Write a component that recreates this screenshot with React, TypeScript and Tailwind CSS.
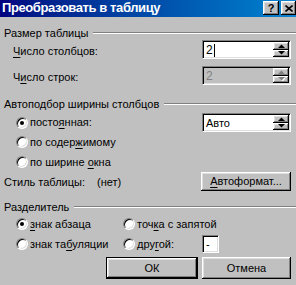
import React from "react";

const raised =
  "bg-[#c0c0c0] shadow-[inset_-1px_-1px_0_#000,inset_1px_1px_0_#fff,inset_-2px_-2px_0_#808080,inset_2px_2px_0_#dfdfdf]";
const sunken =
  "border border-t-[#808080] border-l-[#808080] border-b-white border-r-white shadow-[inset_1px_1px_0_#000,inset_-1px_-1px_0_#dfdfdf]";

function U({ children }: { children: React.ReactNode }) {
  return <span className="underline underline-offset-[2px]">{children}</span>;
}

function GroupHeader({ label, cls }: { label: string; cls: string }) {
  return (
    <div className={`flex items-center h-[14px] -mr-[5px] ${cls}`}>
      <span className="whitespace-nowrap">{label}</span>
      <div className="flex-1 ml-[5px] h-[2px] border-t border-t-[#808080] border-b border-b-white" />
    </div>
  );
}

function Arrow({ up, disabled }: { up: boolean; disabled?: boolean }) {
  const pts = up ? "0,4 3.5,0.5 7,4" : "0,0 3.5,3.5 7,0";
  return (
    <svg width="7" height="4" viewBox="0 0 7 4" className="block">
      {disabled && <polygon points={pts} fill="#fff" transform="translate(1,1)" />}
      <polygon points={pts} fill={disabled ? "#808080" : "#000"} />
    </svg>
  );
}

function Spinner({
  children,
  disabled,
}: {
  children: React.ReactNode;
  disabled?: boolean;
}) {
  return (
    <div
      className={`w-[89px] h-[19px] flex ${sunken} ${disabled ? "bg-[#c0c0c0] text-[#808080]" : "bg-white"}`}
    >
      <div className="flex-1 flex items-center pl-[3px] pt-[1px] text-[12px]">{children}</div>
      <div className="flex flex-col w-[16px] py-[1px] pr-[1px] box-content">
        <div className={`flex-1 flex items-center justify-center ${raised}`}>
          <Arrow up disabled={disabled} />
        </div>
        <div className={`flex-1 flex items-center justify-center ${raised}`}>
          <Arrow up={false} disabled={disabled} />
        </div>
      </div>
    </div>
  );
}

function Radio({ checked }: { checked?: boolean }) {
  return (
    <div className="w-[12px] h-[12px] rounded-full bg-white border border-t-[#808080] border-l-[#808080] border-b-white border-r-white shadow-[inset_1px_1px_0_#000,inset_-1px_-1px_0_#dfdfdf] flex items-center justify-center shrink-0">
      {checked && <div className="w-[4px] h-[4px] rounded-full bg-black" />}
    </div>
  );
}

function RadioItem({
  checked,
  children,
  cls = "",
}: {
  checked?: boolean;
  children: React.ReactNode;
  cls?: string;
}) {
  return (
    <div className={`flex items-center gap-[2px] ${cls}`}>
      <Radio checked={checked} />
      <span className="whitespace-nowrap">{children}</span>
    </div>
  );
}

function Button({
  children,
  w,
  def,
}: {
  children: React.ReactNode;
  w: string;
  def?: boolean;
}) {
  if (def) {
    return (
      <div className={`${w} h-full border border-black`}>
        <div className={`w-full h-full flex items-center justify-center ${raised}`}>{children}</div>
      </div>
    );
  }
  return <div className={`${w} h-full flex items-center justify-center ${raised}`}>{children}</div>;
}

export default function App() {
  return (
    <div className="w-[296px] h-[285px] bg-[#c0c0c0] overflow-hidden text-[11px] leading-none text-black font-['Liberation_Sans',Arial,sans-serif]">
      <div className="h-[17px] flex items-start justify-between bg-linear-to-r from-[#000080] to-[#1084d0]">
        <span className="text-white font-bold text-[13px] tracking-[-0.4px] leading-[16px] pl-[2px] whitespace-nowrap">
          Преобразовать в таблицу
        </span>
        <div className="flex gap-[2px] pt-[1px]">
          <div className={`w-[16px] h-[14px] flex items-center justify-center font-bold text-[11px] ${raised}`}>?</div>
          <div className={`w-[15px] h-[14px] flex items-center justify-center ${raised}`}>
            <svg width="8" height="7" viewBox="0 0 8 7">
              <path d="M0.5 0.5 L7.5 6.5 M7.5 0.5 L0.5 6.5" stroke="#000" strokeWidth="1.6" />
            </svg>
          </div>
        </div>
      </div>

      <div className="flex flex-col pl-[4px] pr-[5px]">
        <GroupHeader label="Размер таблицы" cls="mt-[9px]" />
        <div className="flex items-center justify-between h-[19px]">
          <span className="pl-[9px] pt-[3px]">
            <U>Ч</U>исло столбцов:
          </span>
          <Spinner>
            <span>2</span>
            <span className="inline-block w-[1px] h-[13px] bg-black ml-[1px]" />
          </Spinner>
        </div>
        <div className="flex items-center justify-between h-[19px] mt-[7px]">
          <span className="pl-[9px] pt-[3px]">
            Ч<U>и</U>сло строк:
          </span>
          <Spinner disabled>2</Spinner>
        </div>

        <GroupHeader label="Автоподбор ширины столбцов" cls="mt-[12px]" />
        <div className="flex items-center justify-between h-[19px] mt-[2px]">
          <RadioItem checked cls="pl-[12px]">
            посто<U>я</U>нная:
          </RadioItem>
          <Spinner>
            <span className="text-[11px]">Авто</span>
          </Spinner>
        </div>
        <div className="flex items-center h-[14px] mt-[3px]">
          <RadioItem cls="pl-[12px]">
            по содер<U>ж</U>имому
          </RadioItem>
        </div>
        <div className="flex items-center h-[14px] mt-[6px]">
          <RadioItem cls="pl-[12px]">
            по ширине <U>о</U>кна
          </RadioItem>
        </div>

        <div className="flex items-center justify-between h-[19px] mt-[3px]">
          <div className="flex whitespace-nowrap pt-[2px]">
            <span className="w-[93px]">Стиль таблицы:</span>
            <span>(нет)</span>
          </div>
          <Button w="w-[90px]">
            <span>
              <U>А</U>втоформат...
            </span>
          </Button>
        </div>

        <GroupHeader label="Разделитель" cls="mt-[9px]" />
        <div className="flex items-center h-[14px] mt-[3px]">
          <RadioItem checked cls="pl-[12px] w-[119px]">
            <U>з</U>нак абзаца
          </RadioItem>
          <RadioItem>
            точ<U>к</U>а с запятой
          </RadioItem>
        </div>
        <div className="flex items-center h-[18px] mt-[4px]">
          <RadioItem cls="pl-[12px] w-[119px]">
            знак та<U>б</U>уляции
          </RadioItem>
          <RadioItem cls="w-[79px]">
            дру<U>г</U>ой:
          </RadioItem>
          <div className={`w-[17px] h-[18px] bg-white ${sunken} flex items-center pl-[3px]`}>-</div>
        </div>

        <div className="flex justify-end gap-[4px] h-[22px] mt-[4px]">
          <Button w="w-[92px]" def>
            ОК
          </Button>
          <Button w="w-[89px]">Отмена</Button>
        </div>
      </div>
    </div>
  );
}
